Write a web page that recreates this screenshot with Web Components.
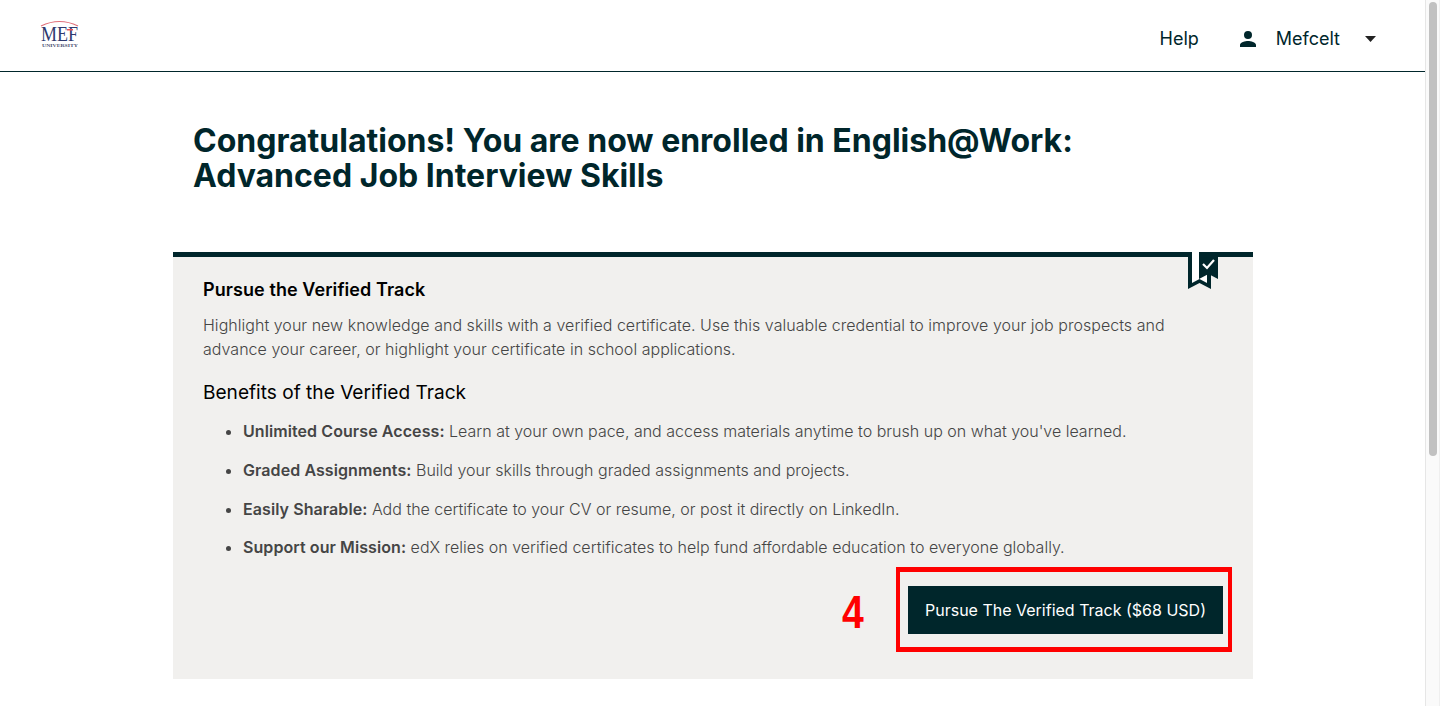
<!DOCTYPE html>
<html lang="en">
<head>
<meta charset="utf-8">
<title>Enrolled</title>
<style>
html, body { margin: 0; height: 706px; overflow: hidden; background: #fff; }
body { font-family: Inter, sans-serif; }
</style>
</head>
<body>
<app-page>
  <site-header></site-header>
  <congrats-title>Congratulations! You are now enrolled in English@Work:<br>Advanced Job Interview Skills</congrats-title>
  <track-card>
    <benefit-item label="Unlimited Course Access:">Learn at your own pace, and access materials anytime to brush up on what you've learned.</benefit-item>
    <benefit-item label="Graded Assignments:">Build your skills through graded assignments and projects.</benefit-item>
    <benefit-item label="Easily Sharable:">Add the certificate to your CV or resume, or post it directly on LinkedIn.</benefit-item>
    <benefit-item label="Support our Mission:">edX relies on verified certificates to help fund affordable education to everyone globally.</benefit-item>
  </track-card>
</app-page>
<script>
class AppPage extends HTMLElement {
    constructor() {
        super();
        this.attachShadow({ mode: 'open' });
        this.shadowRoot.innerHTML = `
            <style>
            :host { display: flex; height: 706px; overflow: hidden; }
            #main { flex: 1; min-width: 0; }
            #bar { width: 15px; background: #fafafa; border-left: 1px solid #e6e6e6; border-right: 1px solid #efefef; box-sizing: border-box; padding: 2px 2px 0 3px; }
            #thumb { height: 454px; background: #c1c1c1; border-radius: 5px; }
            </style>
            <div id="main"><slot></slot></div>
            <div id="bar"><div id="thumb"></div></div>
        `;
    }
}

class SiteHeader extends HTMLElement {
    constructor() {
        super();
        this.attachShadow({ mode: 'open' });
        this.shadowRoot.innerHTML = `
            <style>
            :host { display: flex; align-items: center; justify-content: space-between; height: 65px; border-bottom: 1px solid #00262b; padding: 6px 49px 0 41px; color: #00262b; font-size: 18px; }
            nav { display: flex; align-items: center; }
            #help { margin-right: 36px; }
            #user { margin-right: 16px; margin-left: 1px; }
            #name { margin-right: 25px; }
            svg { display: block; overflow: visible; }
            #logo { margin-top: -7px; }
            </style>
            <svg id="logo" width="38" height="28" viewBox="0 0 38 28">
                <path d="M0 5 Q18.500 -4 37 5" fill="none" stroke="#e0707a" stroke-width="1.200"/>
                <text x="0" y="20" font-family="Liberation Serif, serif" font-size="22" fill="#2e3a6e" textLength="37" lengthAdjust="spacingAndGlyphs">MEF</text>
                <path d="M26 8h6v1.500h-6z" fill="#e8505a"/>
                <text x="1" y="25.500" font-family="Liberation Serif, serif" font-weight="700" font-size="4.500" fill="#4a5070" textLength="36" lengthAdjust="spacingAndGlyphs">UNIVERSITY</text>
            </svg>
            <nav>
                <span id="help">Help</span>
                <svg id="user" width="24" height="24" viewBox="0 0 24 24" fill="#00262b"><path d="M12 12a4 4 0 1 0 0-8 4 4 0 0 0 0 8zm0 2c-2.700 0-8 1.300-8 4v2h16v-2c0-2.700-5.300-4-8-4z"/></svg>
                <span id="name">Mefcelt</span>
                <svg width="11" height="6" viewBox="0 0 11 6" fill="#222"><path d="M0 0h11L5.500 6z"/></svg>
            </nav>
        `;
    }
}

class CongratsTitle extends HTMLElement {
    constructor() {
        super();
        this.attachShadow({ mode: 'open' });
        this.shadowRoot.innerHTML = `
            <style>
            :host { display: block; margin: 51px 0 59px 193px; font-size: 32px; line-height: 35px; font-weight: 700; color: #00262b; }
            </style>
            <slot></slot>
        `;
    }
}

class TrackCard extends HTMLElement {
    constructor() {
        super();
        this.attachShadow({ mode: 'open' });
        this.shadowRoot.innerHTML = `
            <style>
            :host { display: block; position: relative; width: 1080px; margin-left: 173px; box-sizing: border-box; background: #f1f0ee; border-top: 5px solid #00262b; padding: 20px 30px 0; height: 427px; color: #454545; }
            #ribbon { position: absolute; top: -5px; right: 34px; }
            h3 { margin: 0 0 11px; font-size: 18px; line-height: 26px; font-weight: 600; color: #000; letter-spacing: 0.08px; }
            p { margin: 0 0 18px; font-size: 16px; line-height: 23.600px; font-weight: 300; letter-spacing: 0.03px; }
            h4 { margin: 0 0 14px; font-size: 19.100px; line-height: 26px; font-weight: 400; color: #000; }
            ul { margin: 0; padding: 0 0 0 40px; }
            #actions { position: relative; display: flex; justify-content: flex-end; margin-top: 27px; }
            #num { position: absolute; left: 639px; top: -2px; color: #f00; font: 700 46px/56px "Liberation Sans", sans-serif; transform: scaleX(0.85); transform-origin: left center; }
            #frame { position: absolute; top: -19px; bottom: -18px; left: 693px; right: -9px; border-style: solid; border-color: #f00; border-width: 5px 4px; }
            button { display: block; height: 48px; width: 315px; background: #00262b; color: #fff; border: 0; font: 400 16px Inter, sans-serif; padding: 0; }
            </style>
            <svg id="ribbon" width="31" height="38" viewBox="0 0 31 38">
                <path d="M0 0h23v37l-11.500-6-11.500 6z" fill="#00262b"/>
                <path d="M4 0h15v31l-7.500-4-7.500 4z" fill="#fff"/>
                <path d="M11 0h19v27l-9.500-5-9.500 5z" fill="#00262b"/>
                <path d="M15 12l4 4 7-8" fill="none" stroke="#fff" stroke-width="2.200"/>
            </svg>
            <h3>Pursue the Verified Track</h3>
            <p>Highlight your new knowledge and skills with a verified certificate. Use this valuable credential to improve your job prospects and advance your career, or highlight your certificate in school applications.</p>
            <h4>Benefits of the Verified Track</h4>
            <ul><slot></slot></ul>
            <div id="actions">
                <span id="num">4</span>
                <button>Pursue The Verified Track ($68 USD)</button>
                <div id="frame"></div>
            </div>
        `;
    }
}

class BenefitItem extends HTMLElement {
    constructor() {
        super();
        this.attachShadow({ mode: 'open' });
        this.shadowRoot.innerHTML = `
            <style>
            :host { display: list-item; list-style: disc; font-size: 16px; line-height: 24px; margin-bottom: 14.670px; font-weight: 300; }
            b { font-weight: 600; letter-spacing: 0.08px; }
            </style>
            <b>${this.getAttribute('label')}</b> <slot></slot>
        `;
    }
}

customElements.define('app-page', AppPage);
customElements.define('site-header', SiteHeader);
customElements.define('congrats-title', CongratsTitle);
customElements.define('track-card', TrackCard);
customElements.define('benefit-item', BenefitItem);
</script>
</body>
</html>
